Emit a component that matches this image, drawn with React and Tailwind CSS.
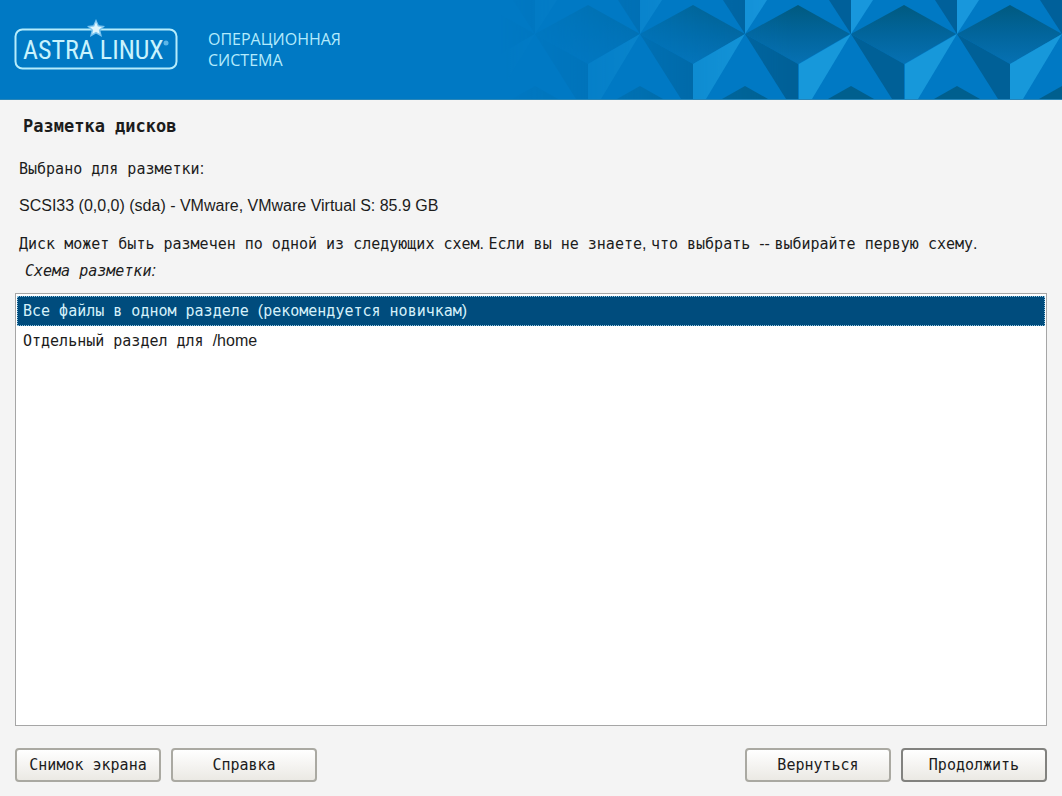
import React, { useState } from 'react'

const apexes = [-70, 35, 140, 245, 351, 457, 562]

const schemes = [
  {
    id: 'single',
    label: <>Все файлы в одном разделе <Latin>(</Latin>рекомендуется новичкам<Latin>)</Latin></>,
  },
  {
    id: 'home',
    label: <>Отдельный раздел для <Latin>/home</Latin></>,
  },
]

// latin letters and punctuation use the proportional face
function Latin({ children }) {
  return <span className="font-['Liberation_Sans',Arial,sans-serif] text-base leading-none">{children}</span>
}

function Logo() {
  return (
    <svg width="166" height="54" viewBox="0 0 166 54" role="img" aria-label="Astra Linux">
      <rect x="1.5" y="10.5" width="161" height="39" rx="7" fill="none" stroke="#b5ecfb" strokeWidth="2" />
      <text x="9" y="40" fontSize="26" fill="#c9f3fd" fontFamily="'Liberation Sans Narrow', 'Roboto Condensed', 'Liberation Sans', sans-serif">
        ASTRA LINUX
      </text>
      <circle cx="152" cy="24" r="2.5" fill="#5db6e8" />
      <path
        d="M82 0 L84.8 6.2 L91 7 L86.4 11.4 L88 18 L82 14.6 L76 18 L77.6 11.4 L73 7 L79.2 6.2 Z"
        fill="#7cc4ee"
      />
      <path d="M82 3 L83.8 7.4 L88 8 L84.8 11 L85.8 15 L82 12.8 L78.2 15 L79.2 11 L76 8 L80.2 7.4 Z" fill="#dff6fd" />
    </svg>
  )
}

function Facets() {
  return (
    <svg width="562" height="99" viewBox="0 0 562 99" className="shrink-0" aria-hidden="true">
      <defs>
        <linearGradient id="rhomb" x1="0" y1="0" x2="0" y2="1">
          <stop offset="0" stopColor="#005a80" />
          <stop offset="0.5" stopColor="#02659c" />
          <stop offset="1" stopColor="#0671b3" />
        </linearGradient>
        <linearGradient id="fade" x1="0" y1="0" x2="1" y2="0">
          <stop offset="0" stopColor="#fff" stopOpacity="0" />
          <stop offset="0.1" stopColor="#fff" stopOpacity="0.12" />
          <stop offset="0.25" stopColor="#fff" stopOpacity="0.36" />
          <stop offset="0.4" stopColor="#fff" stopOpacity="0.75" />
          <stop offset="0.52" stopColor="#fff" stopOpacity="1" />
        </linearGradient>
        <mask id="fadeMask">
          <rect width="562" height="99" fill="url(#fade)" />
        </mask>
      </defs>
      <g mask="url(#fadeMask)">
        {apexes.map((x) => (
          <g key={x} transform={`translate(${x} 0)`}>
            <path d="M0 34 L53 5 L105 34 L53 64 Z" fill="url(#rhomb)" />
            <path d="M0 0 V34 L-22 0 Z" fill="#00609a" />
            <path d="M0 0 V34 L22 0 Z" fill="#1897dc" />
            <path d="M0 34 L-52 64 V99 H-39 Z" fill="#1798da" />
            <path d="M0 34 L53 64 V99 H41 Z" fill="#006097" />
            <path d="M0 86 L23 99 H-23 Z" fill="#005f8e" />
          </g>
        ))}
      </g>
    </svg>
  )
}

function Header() {
  return (
    <header className="flex items-start justify-between overflow-hidden border-b border-[#2a86b8] bg-[#0079c4]">
      <div className="flex gap-7 pl-[14px] pt-[19px]">
        <Logo />
        <p className="pt-[10px] font-['Open_Sans',sans-serif] text-base leading-[21px] text-[#b4ebfc]">
          ОПЕРАЦИОННАЯ
          <br />
          СИСТЕМА
        </p>
      </div>
      <Facets />
    </header>
  )
}

function Button({ children, primary }) {
  return (
    <button
      type="button"
      className={`h-[34px] w-[146px] rounded border-2 bg-linear-to-b from-white to-[#ebe9e4] hover:to-white ${
        primary ? 'border-[#82827f]' : 'border-[#aaa9a2]'
      }`}
    >
      {children}
    </button>
  )
}

export default function App() {
  const [scheme, setScheme] = useState('single')

  return (
    <div className="flex min-h-screen flex-col bg-[#f4f4f4] font-['DejaVu_Sans_Mono',monospace] text-[15px] leading-6 text-[#1c1c1c]">
      <Header />

      <main className="flex flex-1 flex-col px-[15px] pb-[14px]">
        <h1 className="mt-[14px] pl-2 text-[17px] font-bold">Разметка дисков</h1>
        <p className="mt-[19px] pl-1">Выбрано для разметки<Latin>:</Latin></p>
        <p className="mt-[13px] pl-1">
          <Latin>SCSI33 (0,0,0) (sda) - VMware, VMware Virtual S: 85.9 GB</Latin>
        </p>
        <p className="mt-[14px] pl-1">
          Диск может быть размечен по одной из следующих схем<Latin>. </Latin>Если вы не знаете
          <Latin>, </Latin>что выбрать <Latin>-- </Latin>выбирайте первую схему<Latin>.</Latin>
        </p>
        <p id="scheme-label" className="mt-[3px] pl-[10px] italic">Схема разметки<Latin>:</Latin></p>

        <div
          role="radiogroup"
          aria-labelledby="scheme-label"
          className="mt-[10px] flex-1 border border-[#a6a6a6] bg-white p-px pt-[2px]"
        >
          {schemes.map((s) => (
            <label
              key={s.id}
              className="block border border-dotted border-transparent px-[5px] py-[2px] has-checked:border-[#8fc4e0] has-checked:bg-[#004c7d] has-checked:text-[#d5f1fa]"
            >
              <input
                type="radio"
                name="scheme"
                className="sr-only"
                checked={scheme === s.id}
                onChange={() => setScheme(s.id)}
              />
              {s.label}
            </label>
          ))}
        </div>

        <div className="mt-[22px] flex justify-between">
          <div className="flex gap-[10px]">
            <Button>Снимок экрана</Button>
            <Button>Справка</Button>
          </div>
          <div className="flex gap-[10px]">
            <Button>Вернуться</Button>
            <Button primary>Продолжить</Button>
          </div>
        </div>
      </main>
    </div>
  )
}
